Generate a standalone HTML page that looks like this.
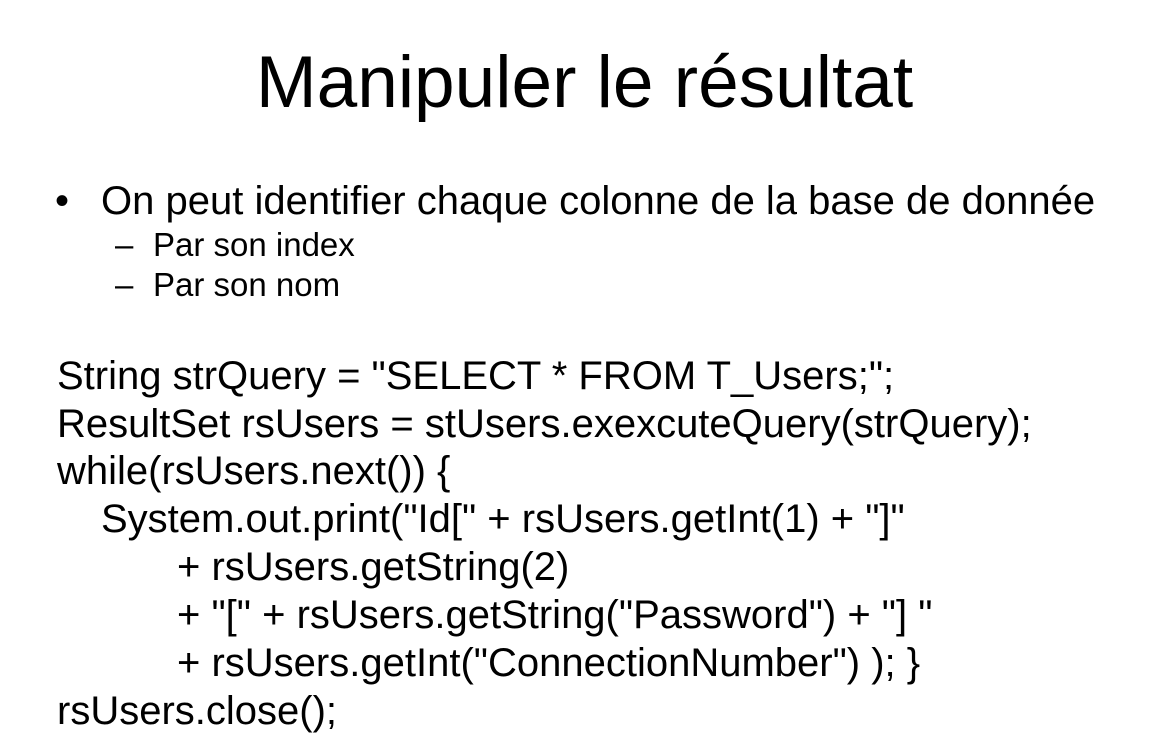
<!DOCTYPE html>
<html><head><meta charset="utf-8"><style>
html,body{margin:0;padding:0;background:#fff;width:1167px;height:744px;overflow:hidden;position:relative}
div{position:absolute;font-family:"Liberation Sans",Arial,sans-serif;color:#000;white-space:pre;line-height:1}
.t{left:0;width:1167px;text-align:center;font-size:73px;top:46px}
.b{font-size:40px}
.s{font-size:33px}
.c{font-size:40px}
</style></head><body>
<div class="t" style="left:1px">Manipuler le résultat</div>
<div class="b" style="left:55px;top:181px">•</div>
<div class="b" style="left:101px;top:181px">On peut identifier chaque colonne de la base de donnée</div>
<div class="s" style="left:115px;top:228px">–</div>
<div class="s" style="left:153px;top:228px">Par son index</div>
<div class="s" style="left:115px;top:268px">–</div>
<div class="s" style="left:153px;top:268px">Par son nom</div>
<div class="c" style="left:57px;top:356px">String strQuery = "SELECT * FROM T_Users;";</div>
<div class="c" style="left:57px;top:404px">ResultSet rsUsers = stUsers.exexcuteQuery(strQuery);</div>
<div class="c" style="left:57px;top:451px">while(rsUsers.next()) {</div>
<div class="c" style="left:101px;top:499px">System.out.print("Id[" + rsUsers.getInt(1) + "]"</div>
<div class="c" style="left:177px;top:547px">+ rsUsers.getString(2)</div>
<div class="c" style="left:177px;top:595px">+ "[" + rsUsers.getString("Password") + "] "</div>
<div class="c" style="left:177px;top:643px">+ rsUsers.getInt("ConnectionNumber") ); }</div>
<div class="c" style="left:57px;top:691px">rsUsers.close();</div>
</body></html>
